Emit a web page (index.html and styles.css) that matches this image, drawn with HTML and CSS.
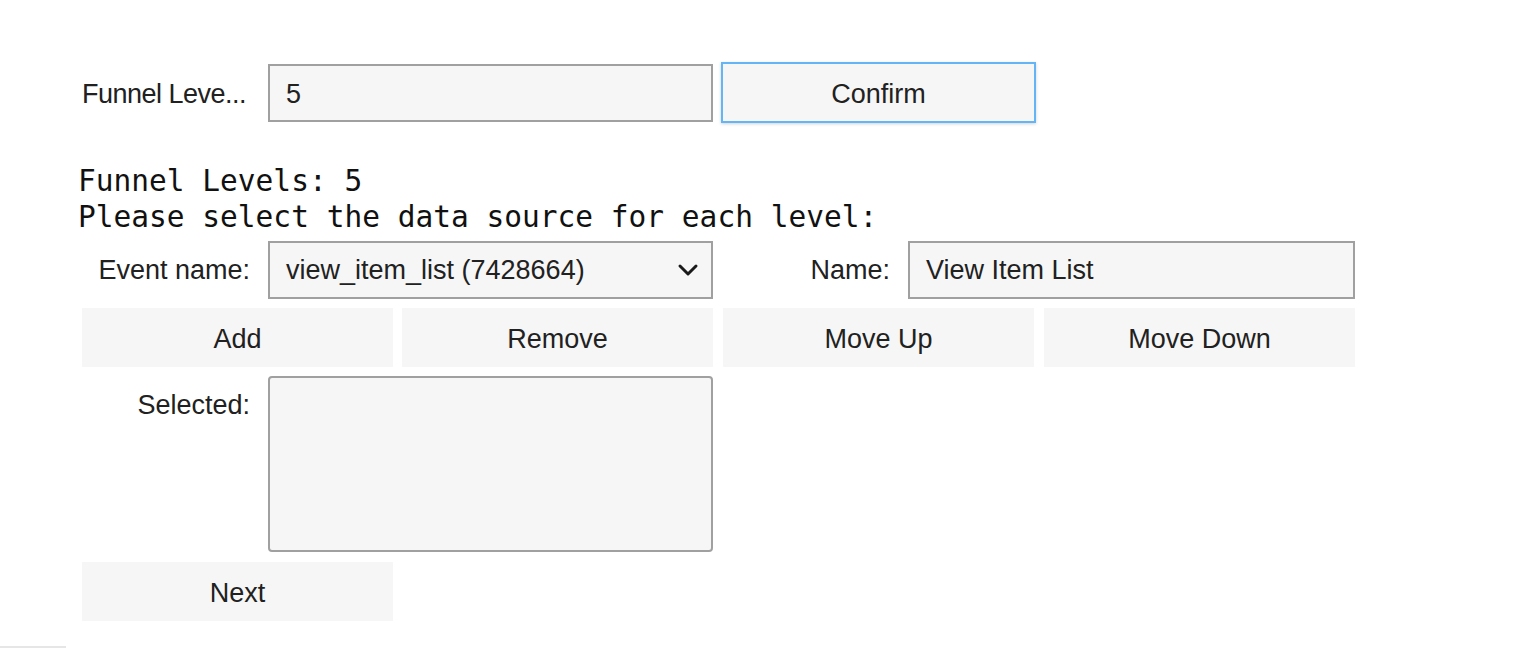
FILE: index.html
```html
<!DOCTYPE html>
<html>
<head>
<meta charset="utf-8">
<link rel="stylesheet" href="styles.css">
</head>
<body>
<div class="page">
  <div class="row row-top">
    <div class="wlabel wlabel-left">Funnel Leve...</div>
    <div class="field field-top">5</div>
    <button class="btn btn-focus">Confirm</button>
  </div>

  <pre class="out">Funnel Levels: 5
Please select the data source for each level:</pre>

  <div class="row row-event">
    <div class="widget">
      <div class="wlabel">Event name:</div>
      <div class="field select">
        <span>view_item_list (7428664)</span>
        <svg class="chev" width="22" height="14" viewBox="0 0 22 14"><path d="M3 3 L11 11 L19 3" fill="none" stroke="#1a1a1a" stroke-width="3" stroke-linecap="round" stroke-linejoin="round"/></svg>
      </div>
    </div>
    <div class="widget">
      <div class="wlabel">Name:</div>
      <div class="field field-wide">View Item List</div>
    </div>
  </div>

  <div class="row row-btns">
    <button class="btn">Add</button>
    <button class="btn">Remove</button>
    <button class="btn btn-shift">Move Up</button>
    <button class="btn btn-shift">Move Down</button>
  </div>

  <div class="row row-selected">
    <div class="wlabel wlabel-top">Selected:</div>
    <div class="textarea"></div>
  </div>

  <div class="row row-next">
    <button class="btn">Next</button>
  </div>

  <div class="bottom-line"></div>
</div>
</body>
</html>
```

FILE: styles.css
```css
html, body {
  margin: 0;
  padding: 0;
  background: #ffffff;
}

.page {
  padding: 62px 0 0 78px;
  font-family: "Liberation Sans", Arial, sans-serif;
  font-size: 27px;
  color: #212121;
}

.row {
  display: flex;
  align-items: center;
  margin-left: 4px;
}

.row-top {
  height: 61px;
}

.wlabel {
  width: 168px;
  flex: none;
  margin-right: 18px;
  text-align: right;
  white-space: nowrap;
  line-height: 58px;
}

.wlabel-left {
  text-align: left;
  letter-spacing: -0.5px;
  padding-top: 2px;
}

.wlabel-top {
  align-self: flex-start;
}

.field {
  box-sizing: border-box;
  width: 445px;
  height: 58px;
  border: 2px solid #a0a0a0;
  background: #f6f6f6;
  padding: 0 16px;
  display: flex;
  align-items: center;
  white-space: nowrap;
}

.field-top {
  padding-top: 3px;
}

.field-wide {
  width: 447px;
}

.select {
  justify-content: space-between;
  padding-right: 12px;
}

.chev {
  display: block;
}

.btn {
  box-sizing: border-box;
  width: 311px;
  height: 59px;
  border: none;
  background: #f6f6f6;
  font-family: "Liberation Sans", Arial, sans-serif;
  font-size: 27px;
  color: #212121;
  padding: 3px 0 0 0;
  flex: none;
}

.btn-focus {
  width: 315px;
  height: 61px;
  margin-left: 8px;
  border: 2px solid #64b5f6;
  box-shadow: 0 1px 3px rgba(0, 0, 0, 0.18);
}

.out {
  margin: 40px 0 0 0;
  font-family: "DejaVu Sans Mono", monospace;
  font-size: 29.5px;
  line-height: 36px;
  color: #111111;
}

.row-event {
  margin-top: 6px;
  gap: 9px;
}

.widget {
  display: flex;
  align-items: center;
}

.row-btns {
  margin-top: 9px;
  gap: 9px;
}

.btn-shift {
  margin-left: 1px;
}

.row-selected {
  margin-top: 9px;
  align-items: flex-start;
}

.textarea {
  box-sizing: border-box;
  width: 445px;
  height: 176px;
  border: 2px solid #a0a0a0;
  border-radius: 4px;
  background: #f6f6f6;
}

.row-next {
  margin-top: 10px;
}

.bottom-line {
  margin: 25px 0 0 -78px;
  width: 66px;
  height: 2px;
  background: #e6e6e6;
}
```
